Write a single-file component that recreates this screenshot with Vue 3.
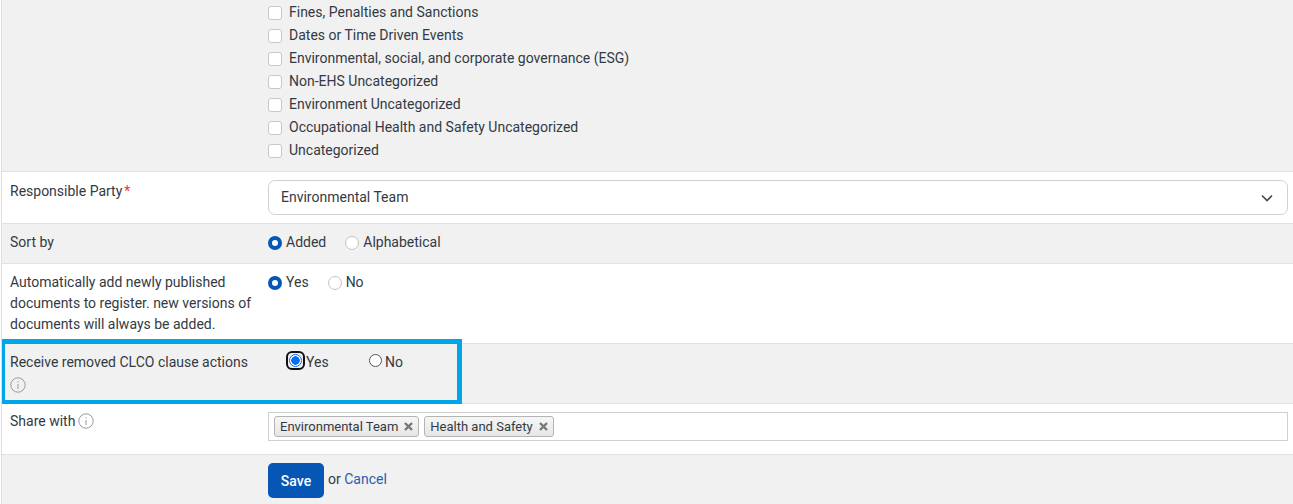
<script setup>
const categories = [
  'Fines, Penalties and Sanctions',
  'Dates or Time Driven Events',
  'Environmental, social, and corporate governance (ESG)',
  'Non-EHS Uncategorized',
  'Environment Uncategorized',
  'Occupational Health and Safety Uncategorized',
  'Uncategorized'
]
</script>

<template>
  <div class="form">
    <div class="row gray cats">
      <div class="label"></div>
      <div class="control list">
        <label v-for="c in categories" :key="c" class="check"><span class="box"></span>{{ c }}</label>
      </div>
    </div>

    <div class="row party">
      <div class="label">Responsible Party<span class="req">*</span></div>
      <div class="control">
        <div class="select">
          <span>Environmental Team</span>
          <svg width="12" height="8" viewBox="0 0 12 8"><path d="M1 1.5l5 5 5-5" fill="none" stroke="#444a55" stroke-width="1.6"/></svg>
        </div>
      </div>
    </div>

    <div class="row gray sort">
      <div class="label">Sort by</div>
      <div class="control radios">
        <span class="opt"><span class="radio on"></span>Added</span>
        <span class="opt"><span class="radio"></span>Alphabetical</span>
      </div>
    </div>

    <div class="row auto">
      <div class="label">Automatically add newly published documents to register. new versions of documents will always be added.</div>
      <div class="control radios">
        <span class="opt"><span class="radio on"></span>Yes</span>
        <span class="opt"><span class="radio"></span>No</span>
      </div>
    </div>

    <div class="row gray receive">
      <div class="label">
        Receive removed CLCO clause actions
        <svg class="info block" width="16" height="16" viewBox="0 0 16 16"><circle cx="8" cy="8" r="7.2" fill="none" stroke="#9a9a9a"/><path d="M8 7v5M8 4.2v1.2" stroke="#9a9a9a" fill="none"/></svg>
      </div>
      <div class="native">
        <span class="nopt"><span class="nradio focus"></span>Yes</span>
        <span class="nopt"><span class="nradio"></span>No</span>
      </div>
      <div class="highlight"></div>
    </div>

    <div class="row share">
      <div class="label">
        Share with
        <svg class="info" width="16" height="16" viewBox="0 0 16 16"><circle cx="8" cy="8" r="7.2" fill="none" stroke="#9a9a9a"/><path d="M8 7v5M8 4.2v1.2" stroke="#9a9a9a" fill="none"/></svg>
      </div>
      <div class="control">
        <div class="tags">
          <span class="tag">Environmental Team<svg width="9" height="9" viewBox="0 0 9 9"><path d="M1 1l7 7M8 1L1 8" stroke="#777" stroke-width="2.4"/></svg></span>
          <span class="tag">Health and Safety<svg width="9" height="9" viewBox="0 0 9 9"><path d="M1 1l7 7M8 1L1 8" stroke="#777" stroke-width="2.4"/></svg></span>
        </div>
      </div>
    </div>

    <div class="row gray actions">
      <div class="label"></div>
      <div class="control buttons">
        <button class="save">Save</button>
        <span>or <a class="cancel">Cancel</a></span>
      </div>
    </div>
  </div>
</template>

<style scoped>
.form {
  width: 1293px;
  height: 504px;
  overflow: hidden;
  box-sizing: border-box;
  margin-left: 1px;
  border-left: 1px solid #dedee2;
  font: 14px/21px Roboto, sans-serif;
  color: #333a44;
}
.row {
  display: flex;
  box-sizing: border-box;
  border-bottom: 1px solid #e2e2e6;
  background: #fff;
  position: relative;
}
.gray { background: #f1f1f1; }
.label { width: 258px; flex: none; box-sizing: border-box; padding: 0 8px; }
.control { flex: none; width: 1020px; margin-left: 8px; box-sizing: border-box; }
.cats { height: 172px; }
.list { display: flex; flex-direction: column; gap: 2px; margin-top: 2px; }
.check { display: flex; align-items: center; height: 21px; }
.box {
  width: 12px; height: 12px; margin-right: 7px;
  border: 1px solid #c8c8cc; border-radius: 3px; background: #fff; flex: none;
}
.party { height: 52px; padding-top: 8px; }
.party .label { padding-top: 1px; }
.req { color: #e8392f; margin-left: 2px; }
.select {
  height: 35px; box-sizing: border-box;
  border: 1px solid #d0d0d6; border-radius: 7px; background: #fff;
  display: flex; align-items: center; justify-content: space-between;
  padding: 0 14px 0 12px;
  width: 1020px;
}
.sort { height: 40px; padding-top: 8px; }
.auto { height: 80px; padding-top: 8px; }
.radios { display: flex; }
.opt { display: flex; align-items: center; height: 21px; margin-right: 19px; }
.radio {
  width: 12px; height: 12px; border: 1px solid #c4c4c8; border-radius: 50%;
  background: #fff; margin-right: 4px; flex: none;
}
.radio.on { width: 6px; height: 6px; border: 4px solid #0556b5; }
.receive { height: 60px; padding-top: 8px; }
.info { vertical-align: -3px; margin-left: -1px; }
.info.block { display: block; margin: 4px 0 0; }
.native { display: flex; margin-left: 29px; }
.nopt { display: flex; align-items: flex-start; width: 80px; height: 21px; }
.nradio {
  width: 11px; height: 11px; border: 1px solid #555; border-radius: 50%; background: #fff;
  margin: 2px 3px 0 0; flex: none; position: relative;
}
.nradio.focus {
  border-color: #0a6cf0;
  background: radial-gradient(circle, #0a6cf0 0 4px, #fff 4.5px);
  margin-right: 4px;
}
.nradio.focus::after {
  content: "";
  position: absolute; inset: -4px;
  border: 2px solid #111; border-radius: 6px;
}
.highlight {
  position: absolute; left: -2px; top: -5px; width: 462px; height: 66px;
  box-sizing: border-box; border: 5px solid #00a5ea;
}
.share { height: 51px; padding-top: 7px; }
.tags {
  height: 29px; box-sizing: border-box; border: 1px solid #d0d0d0; margin-top: 1px;
  display: flex; align-items: center; gap: 5px; padding: 0 5px; background: #fff;
}
.tag {
  height: 21px; box-sizing: border-box; display: flex; align-items: center; gap: 6px;
  border: 1px solid #b4b4b4; border-radius: 3px; padding: 0 5px;
  font-size: 13px;
  background: linear-gradient(#f6f6f6, #e6e6e6);
}
.actions { flex: 1; height: 50px; padding-top: 8px; border-bottom: 0; }
.buttons { display: flex; align-items: flex-start; gap: 4px; }
.buttons span { line-height: 32px; }
.save {
  width: 56px; height: 35px; border: 0; border-radius: 5px; background: #0556b5;
  color: #fff; font: 500 14px Roboto, sans-serif; padding: 0;
}
.cancel { color: #2a5db0; }
</style>
